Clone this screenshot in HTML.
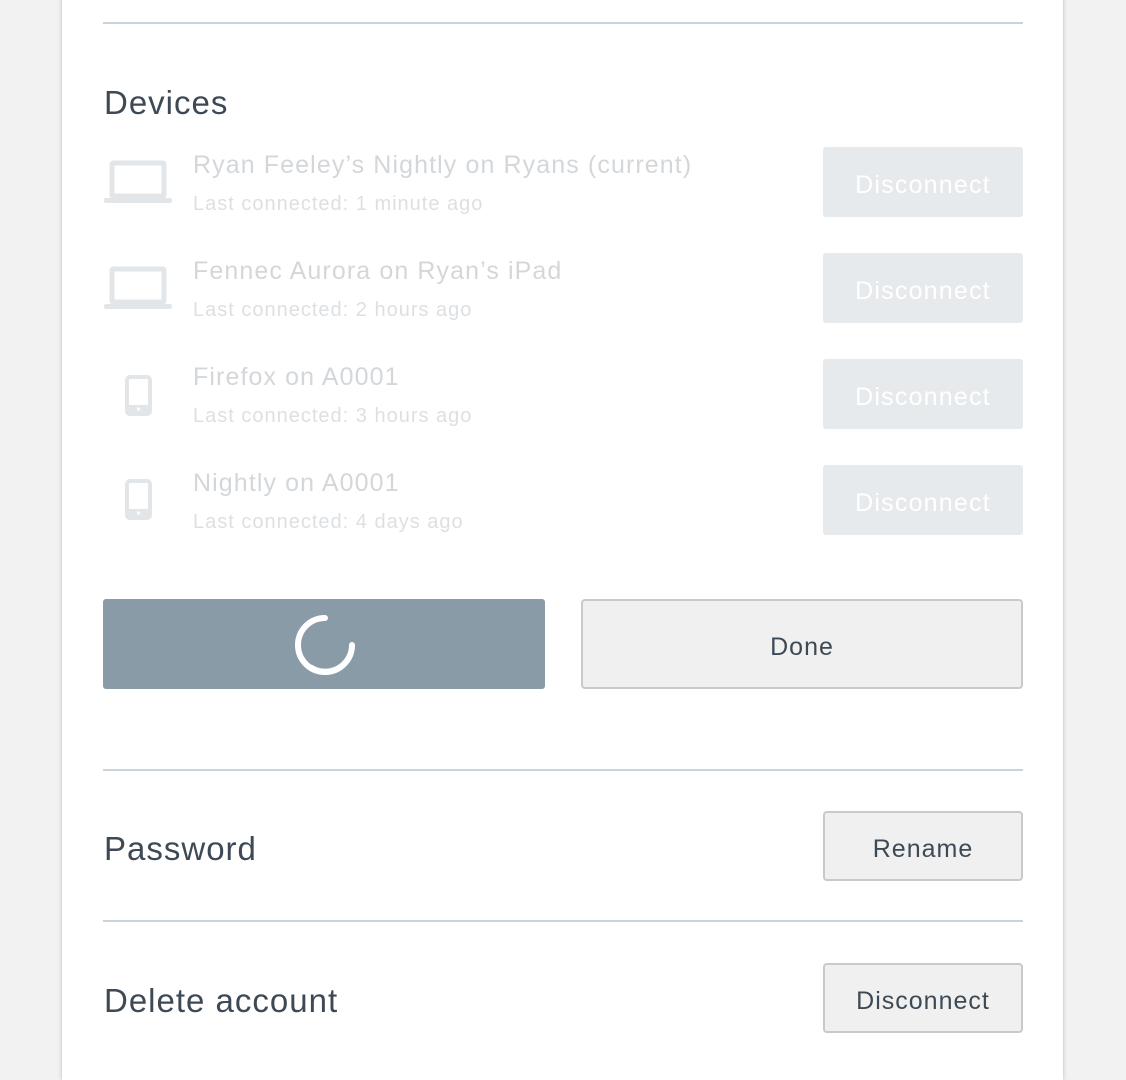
<!DOCTYPE html>
<html><head><style>
*{margin:0;padding:0;box-sizing:border-box}
body{width:1126px;height:1060px;background:#f2f2f2;font-family:"Liberation Sans",sans-serif;position:relative;overflow:hidden}
.card{position:absolute;left:62px;top:-10px;width:1001px;height:1090px;background:#fff;box-shadow:0 0 4px rgba(100,120,140,.45)}
.a{position:absolute}
.line{position:absolute;left:103px;width:920px;height:2px;background:#c8d3dc}
h2{position:absolute;left:104px;font-size:33px;font-weight:normal;color:#3d4a55;line-height:40px;letter-spacing:1px}
.name{position:absolute;left:193px;font-size:25px;color:#d4d7da;line-height:30px;letter-spacing:1.1px}
.sub{position:absolute;left:193px;font-size:20px;color:#dde0e3;line-height:24px;letter-spacing:1px}
.dbtn{position:absolute;left:823px;width:200px;height:70px;background:#e7eaec;border-radius:3px;color:#fff;font-size:25px;text-align:center;line-height:76px;letter-spacing:1.2px}
.btn{position:absolute;background:#f0f0f0;border:2px solid #c9c9c9;border-radius:4px;color:#3d4a55;text-align:center;font-size:25px;letter-spacing:1px}
</style></head><body>
<div class="card"></div>
<div class="line" style="top:22px"></div>
<h2 style="top:83px">Devices</h2>

<svg class="a" style="left:104px;top:160px" width="68" height="44"><rect x="8" y="3" width="52" height="33" fill="none" stroke="#e3e6e9" stroke-width="5" rx="1"/><rect x="0" y="38" width="68" height="5" rx="2" fill="#e3e6e9"/></svg>
<div class="name" style="top:150px">Ryan Feeley’s Nightly on Ryans (current)</div>
<div class="sub" style="top:192px">Last connected: 1 minute ago</div>
<div class="dbtn" style="top:147px">Disconnect</div>

<svg class="a" style="left:104px;top:266px" width="68" height="44"><rect x="8" y="3" width="52" height="33" fill="none" stroke="#e3e6e9" stroke-width="5" rx="1"/><rect x="0" y="38" width="68" height="5" rx="2" fill="#e3e6e9"/></svg>
<div class="name" style="top:256px">Fennec Aurora on Ryan’s iPad</div>
<div class="sub" style="top:298px">Last connected: 2 hours ago</div>
<div class="dbtn" style="top:253px">Disconnect</div>

<svg class="a" style="left:125px;top:375px" width="27" height="42"><rect x="2" y="2" width="23" height="37" rx="3" fill="none" stroke="#e3e6e9" stroke-width="4"/><rect x="2" y="30" width="23" height="9" fill="#e3e6e9"/><circle cx="13.5" cy="34" r="1.6" fill="#fff"/></svg>
<div class="name" style="top:362px">Firefox on A0001</div>
<div class="sub" style="top:404px">Last connected: 3 hours ago</div>
<div class="dbtn" style="top:359px">Disconnect</div>

<svg class="a" style="left:125px;top:479px" width="27" height="42"><rect x="2" y="2" width="23" height="37" rx="3" fill="none" stroke="#e3e6e9" stroke-width="4"/><rect x="2" y="30" width="23" height="9" fill="#e3e6e9"/><circle cx="13.5" cy="34" r="1.6" fill="#fff"/></svg>
<div class="name" style="top:468px">Nightly on A0001</div>
<div class="sub" style="top:510px">Last connected: 4 days ago</div>
<div class="dbtn" style="top:465px">Disconnect</div>

<div class="a" style="left:103px;top:599px;width:442px;height:90px;background:#8a9ba8;border-radius:3px"></div>
<svg class="a" style="left:290px;top:610px" width="70" height="70"><defs><linearGradient id="g" x1="0" y1="0" x2="1" y2="0"><stop offset="0" stop-color="#fff"/><stop offset="1" stop-color="#fff" stop-opacity="0.1"/></linearGradient></defs><path d="M35 8 A27 27 0 1 0 62 35" fill="none" stroke="#fff" stroke-width="6" stroke-linecap="round"/><path d="M20 57 A27 27 0 0 0 62 35" fill="none" stroke="url(#g)" stroke-width="6"/></svg>
<div class="btn" style="left:581px;top:599px;width:442px;height:90px;line-height:92px">Done</div>

<div class="line" style="top:769px"></div>
<h2 style="top:829px">Password</h2>
<div class="btn" style="left:823px;top:811px;width:200px;height:70px;line-height:72px">Rename</div>
<div class="line" style="top:920px"></div>
<h2 style="top:981px">Delete account</h2>
<div class="btn" style="left:823px;top:963px;width:200px;height:70px;line-height:72px">Disconnect</div>
</body></html>
